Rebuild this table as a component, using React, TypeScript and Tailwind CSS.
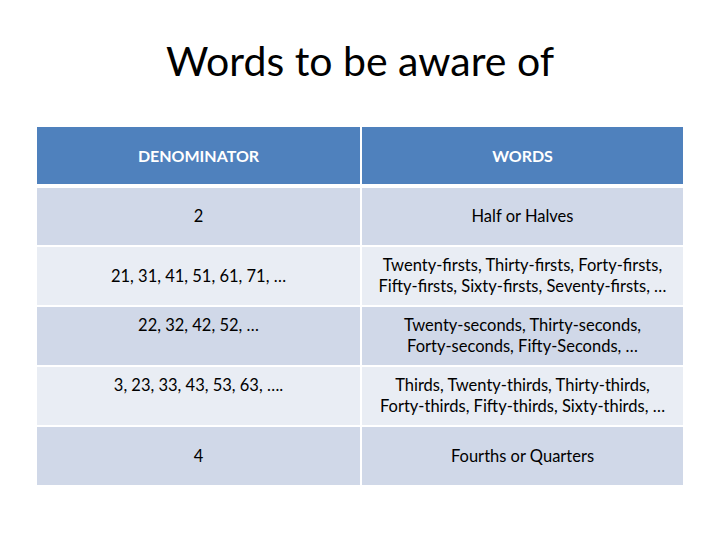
import React from "react";

const rows: { left: string; right: string[]; bg: string; leftTop?: boolean; h: string }[] = [
  { left: "2", right: ["Half or Halves"], bg: "bg-[#d0d8e8]", h: "h-[57px]" },
  {
    left: "21, 31, 41, 51, 61, 71, …",
    right: ["Twenty-firsts, Thirty-firsts, Forty-firsts,", "Fifty-firsts, Sixty-firsts, Seventy-firsts, …"],
    bg: "bg-[#e9edf4]",
    h: "h-[58px]",
  },
  {
    left: "22, 32, 42, 52, …",
    right: ["Twenty-seconds, Thirty-seconds,", "Forty-seconds, Fifty-Seconds, …"],
    bg: "bg-[#d0d8e8]",
    leftTop: true,
    h: "h-[58px]",
  },
  {
    left: "3, 23, 33, 43, 53, 63, ….",
    right: ["Thirds, Twenty-thirds, Thirty-thirds,", "Forty-thirds, Fifty-thirds, Sixty-thirds, …"],
    bg: "bg-[#e9edf4]",
    leftTop: true,
    h: "h-[58px]",
  },
  { left: "4", right: ["Fourths or Quarters"], bg: "bg-[#d0d8e8]", h: "h-[58px]" },
];

export default function App() {
  return (
    <div className="w-[720px] h-[540px] bg-white flex flex-col items-center font-['Lato',sans-serif] text-black">
      <h1 className="mt-[37px] h-[48px] text-[41px] leading-[48px] font-normal text-black">Words to be aware of</h1>
      <div className="mt-[42px] w-[646px] flex flex-col gap-[2px]">
        <div className="flex gap-[2px] h-[57px] mb-[2px] text-white font-bold text-[16px]">
          <div className="w-[323px] bg-[#4f81bd] flex items-center justify-center">DENOMINATOR</div>
          <div className="w-[321px] bg-[#4f81bd] flex items-center justify-center">WORDS</div>
        </div>
        {rows.map((r, i) => (
          <div key={i} className={`flex gap-[2px] ${r.h} text-[16.5px] leading-[21px]`}>
            <div
              className={`w-[323px] ${r.bg} flex justify-center text-center ${r.leftTop ? "items-start pt-[8px]" : "items-center"}`}
            >
              {r.left}
            </div>
            <div className={`w-[321px] ${r.bg} flex flex-col items-center justify-center text-center`}>
              {r.right.map((t, j) => (
                <div key={j}>{t}</div>
              ))}
            </div>
          </div>
        ))}
      </div>
    </div>
  );
}
